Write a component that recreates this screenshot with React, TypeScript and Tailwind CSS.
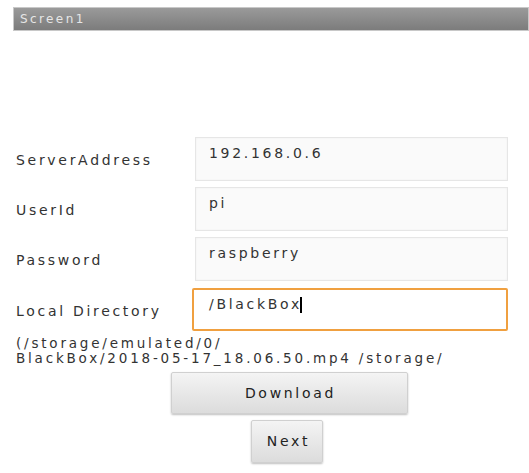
import React from 'react';

const fields = [
  { label: 'ServerAddress', value: '192.168.0.6' },
  { label: 'UserId', value: 'pi' },
  { label: 'Password', value: 'raspberry' },
];

export default function App() {
  return (
    <div
      className="w-[529px] h-[473px] bg-white text-[#333] overflow-hidden"
      style={{ fontFamily: '"DejaVu Sans", sans-serif' }}
    >
      <div className="pt-[7px] pl-[13px]">
        <div className="h-[24px] bg-gradient-to-b from-[#9a9a9a] to-[#7c7c7c] border border-[#c8c8c8] flex items-center pl-[6px]">
          <span className="text-[12px] text-[#e6e6e6] tracking-[2.4px]">Screen1</span>
        </div>
      </div>

      <div className="mt-[106px] pl-[16px] pr-[21px] flex flex-col gap-[6px]">
        {fields.map((f) => (
          <div key={f.label} className="flex items-center h-[44px]">
            <span className="w-[179px] text-[14px] tracking-[2.7px] pt-[3px]">{f.label}</span>
            <div className="flex-1 h-full bg-[#fafafa] border border-[#e6e6e6] shadow-[inset_0_0_2px_#eee] pl-[13px] pt-[5px] text-[14px] tracking-[2.7px]">
              {f.value}
            </div>
          </div>
        ))}
        <div className="flex items-center h-[43px] mt-[1px]">
          <span className="w-[176px] text-[14px] tracking-[2.7px] pt-[3px]">Local Directory</span>
          <div className="flex-1 h-full bg-white border-2 border-[#f0a040] rounded-[2px] pl-[15px] pt-[4px] text-[14px] tracking-[2.7px]">
            /BlackBox<span className="inline-block w-[2px] h-[16px] bg-black align-middle -ml-[2px]" />
          </div>
        </div>
      </div>

      <div className="pl-[16px] pt-[5px] text-[13.5px] leading-[15px] tracking-[2.8px]">
        <div>(/storage/emulated/0/</div>
        <div>BlackBox/2018-05-17_18.06.50.mp4 /storage/</div>
      </div>

      <div className="flex flex-col items-center mt-[6px] gap-[6px]">
        <div className="ml-[49px] w-[237px] h-[42px] bg-gradient-to-b from-[#f4f4f4] to-[#dcdcdc] border border-[#d0d0d0] shadow-[0_1px_2px_rgba(0,0,0,0.25)] rounded-[2px] flex items-center justify-center text-[14px] tracking-[2.7px] pl-[3px] text-[#222]">
          Download
        </div>
        <div className="ml-[45px] w-[72px] h-[43px] bg-gradient-to-b from-[#f4f4f4] to-[#dcdcdc] border border-[#d0d0d0] shadow-[0_1px_2px_rgba(0,0,0,0.25)] rounded-[2px] flex items-center justify-center text-[14px] tracking-[2.7px] pl-[3px] text-[#222]">
          Next
        </div>
      </div>
    </div>
  );
}
